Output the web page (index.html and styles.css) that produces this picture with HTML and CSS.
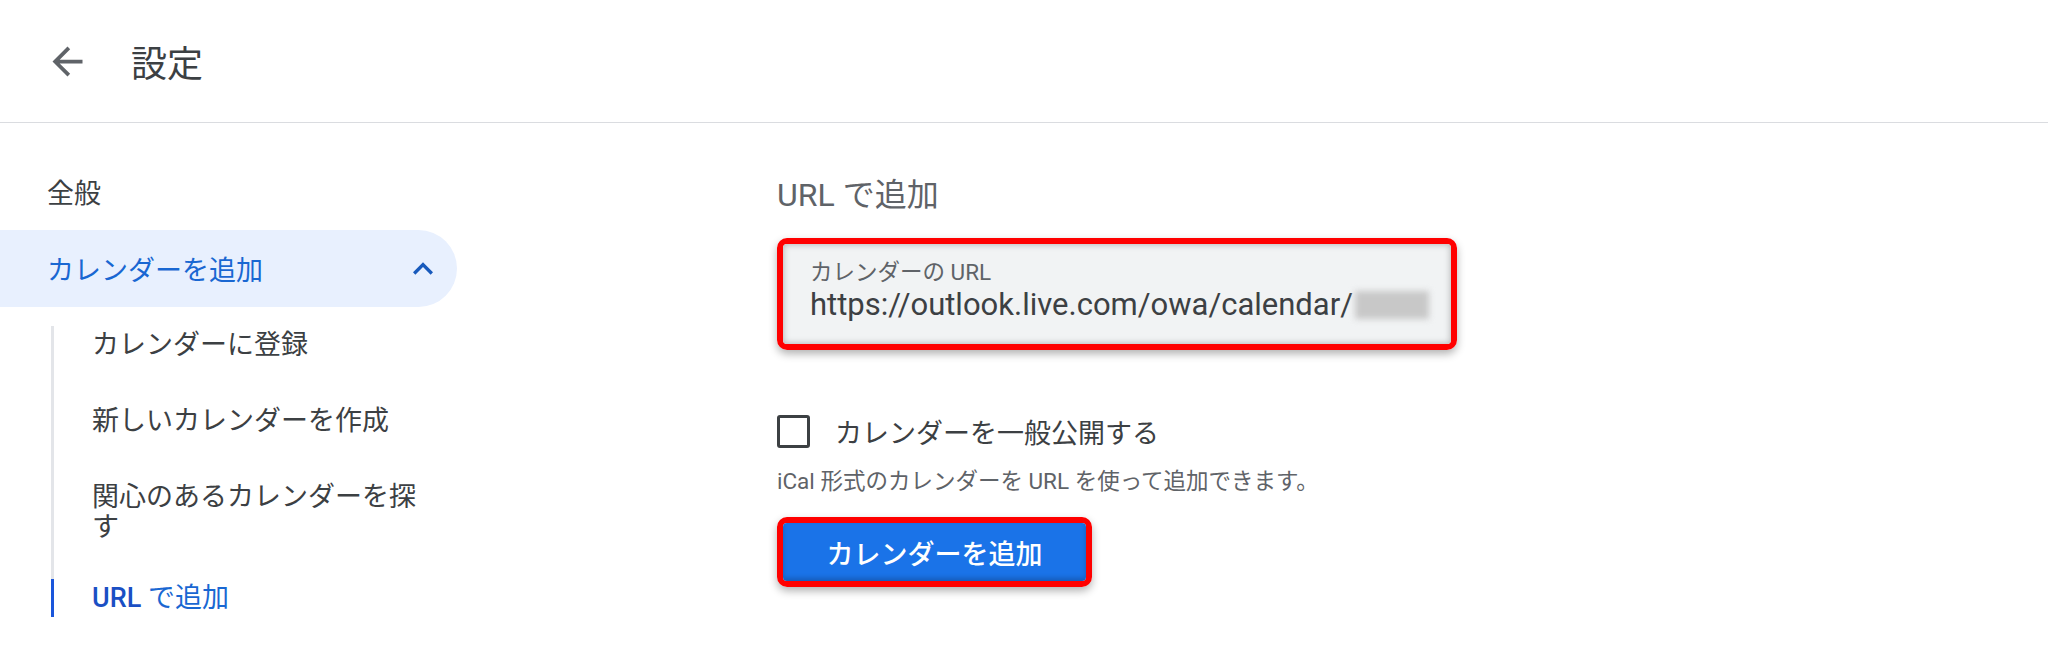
FILE: index.html
```html
<!DOCTYPE html>
<html>
<head>
    <title>設定</title>
    <link rel="stylesheet" href="styles.css">
</head>
<body>
    <header class="topbar">
        <svg class="back-icon" viewBox="0 0 24 24"><path d="M20 11H7.83l5.59-5.59L12 4l-8 8 8 8 1.41-1.41L7.83 13H20v-2z"/></svg>
        <h1 class="title">設定</h1>
    </header>

    <div class="layout">
        <nav class="sidebar">
            <div class="nav-item">全般</div>
            <div class="nav-item open">
                <span>カレンダーを追加</span>
                <svg class="chevron" viewBox="0 0 24 24"><path d="M12 8l-6 6 1.41 1.41L12 10.83l4.59 4.58L18 14z"/></svg>
            </div>
            <ul class="sub-nav">
                <li><a>カレンダーに登録</a></li>
                <li><a>新しいカレンダーを作成</a></li>
                <li><a>関心のあるカレンダーを探す</a></li>
                <li class="active"><a><b>URL</b> で追加</a></li>
            </ul>
        </nav>

        <main class="content">
            <h2 class="section-title">URL で追加</h2>
            <div class="highlight field-box">
                <div class="field">
                    <div class="field-label">カレンダーの URL</div>
                    <div class="field-value">https://outlook.live.com/owa/calendar/<span class="blurred"></span></div>
                </div>
            </div>

            <label class="check-row">
                <span class="checkbox"></span>
                <span>カレンダーを一般公開する</span>
            </label>
            <p class="hint">iCal 形式のカレンダーを URL を使って追加できます。</p>

            <div class="highlight button-box">
                <button type="button" class="add-btn">カレンダーを追加</button>
            </div>
        </main>
    </div>
</body>
</html>
```

FILE: styles.css
```css
body { margin: 0; font-family: Roboto, "Noto Sans CJK JP", sans-serif; color: #3c4043; background: #fff; }

.topbar { height: 122px; border-bottom: 1px solid #dadce0; display: flex; align-items: center; padding-left: 45px; gap: 41px; }
.back-icon { width: 45px; height: 45px; fill: #5f6368; }
.title { margin: 0; font-size: 36px; font-weight: 400; color: #3c4043; }

.layout { display: flex; padding-top: 30px; }
.sidebar { width: 457px; flex-shrink: 0; font-size: 27px; }
.nav-item { height: 77px; display: flex; align-items: center; padding-left: 47px; box-sizing: border-box; }
.nav-item.open { background: #e8f0fe; color: #1967d2; justify-content: space-between; padding-right: 14px; border-radius: 0 39px 39px 0; }
.chevron { width: 40px; height: 40px; fill: #185abc; }

.sub-nav { list-style: none; margin: 19px 30px 19px 51px; padding: 0; border-left: 3px solid #e3e5e9; }
.sub-nav li { padding: 19px 0; }
.sub-nav li:first-child { padding-top: 0; }
.sub-nav li:last-child { padding-bottom: 0; }
.sub-nav li.active { padding-top: 14px; }
.sub-nav a { display: block; padding: 4px 0 4px 38px; line-height: 30px; color: #3c4043; }
.sub-nav li.active a { margin-left: -3px; border-left: 3px solid #1a56db; color: #1967d2; }
.sub-nav b { font-weight: 500; color: #1a4fc4; }

.content { margin-left: 320px; }
.section-title { margin: 0; height: 77px; display: flex; align-items: center; font-size: 32px; font-weight: 400; color: #5f6368; }

.highlight { border: 6px solid #ff0000; border-radius: 10px; box-sizing: border-box; box-shadow: 0 4px 9px rgba(0, 0, 0, 0.3); }
.field-box { width: 680px; height: 112px; margin-top: 8px; overflow: hidden; }
.field { height: 100%; background: #f1f3f4; padding: 14px 0 0 27px; box-sizing: border-box; box-shadow: inset 0 0 7px rgba(0, 0, 0, 0.3); }
.field-label { font-size: 22.5px; line-height: 28px; color: #5f6368; }
.field-value { font-size: 31px; line-height: 38px; color: #3c4043; display: flex; align-items: center; }
.blurred { display: inline-block; width: 74px; height: 28px; background: #c8c8c8; filter: blur(3px); margin-left: 2px; }

.check-row { display: flex; align-items: center; gap: 25px; margin-top: 65px; font-size: 27px; height: 33px; }
.checkbox { width: 33px; height: 33px; border: 3px solid #3c4043; border-radius: 3px; box-sizing: border-box; }
.hint { margin: 18px 0 0; font-size: 22.5px; line-height: 30px; color: #5f6368; }

.button-box { width: 315px; height: 70px; margin-top: 21px; overflow: hidden; }
.add-btn { width: 100%; height: 100%; border: none; background: #1a73e8; color: #fff; font-family: Roboto, "Noto Sans CJK JP", sans-serif; font-size: 27px; font-weight: 500; box-shadow: inset 0 -3px 5px rgba(0, 0, 0, 0.2); cursor: pointer; }
```
